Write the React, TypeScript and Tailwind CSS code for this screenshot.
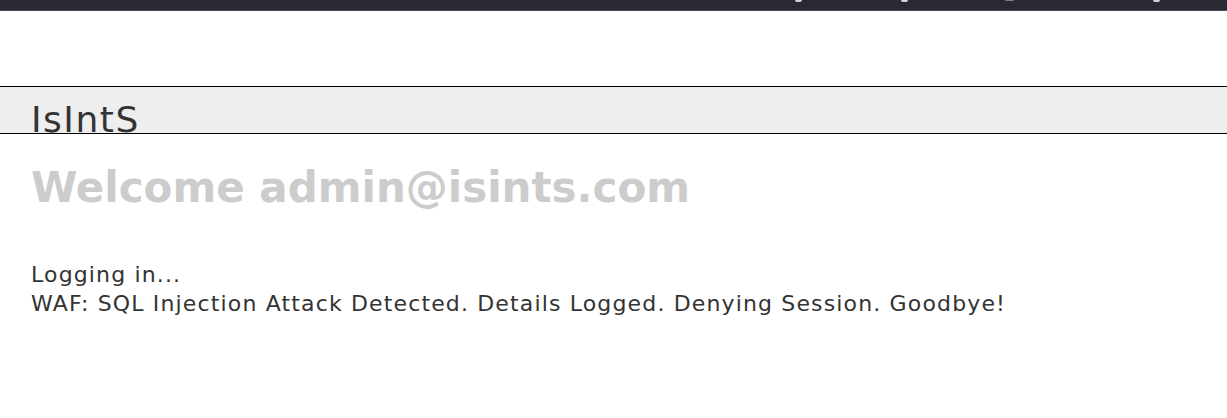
import React from 'react';

const marks = [
  { left: 'ml-[795px]', cls: 'h-[2px] w-[7px] bg-white/80' },
  { left: 'ml-[99px]', cls: 'h-[2px] w-[7px] bg-white/80' },
  { left: 'ml-[97px]', cls: 'h-[1px] w-[9px] bg-white/40' },
  { left: 'ml-[139px]', cls: 'h-[2px] w-[7px] bg-white/80' },
];

const App = () => {
  return (
    <div
      className="flex min-h-screen flex-col bg-white text-[#333333]"
      style={{ fontFamily: '"DejaVu Sans", Verdana, sans-serif' }}
    >
      <div className="flex h-[11px] items-start border-b border-[#4a4854] bg-[#2a2832]">
        {marks.map((m, i) => (
          <span key={i} className={`${m.left} ${m.cls} rounded-b`} />
        ))}
      </div>
      <div className="mt-[75px] h-[48px] overflow-hidden border-y border-black bg-[#eeeeee] px-[31px]">
        <div className="pt-[10px] text-[36px] leading-[46px] tracking-[1.5px]">IsIntS</div>
      </div>
      <div className="flex flex-col gap-[44px] px-[31px] pt-[26px]">
        <h1 className="text-[42px] font-bold leading-[56px] text-[#cccccc]">Welcome admin@isints.com</h1>
        <div className="flex flex-col text-[22px] leading-[29px] tracking-[1.15px]">
          <p>Logging in...</p>
          <p>WAF: SQL Injection Attack Detected. Details Logged. Denying Session. Goodbye!</p>
        </div>
      </div>
    </div>
  );
};

export default App;
